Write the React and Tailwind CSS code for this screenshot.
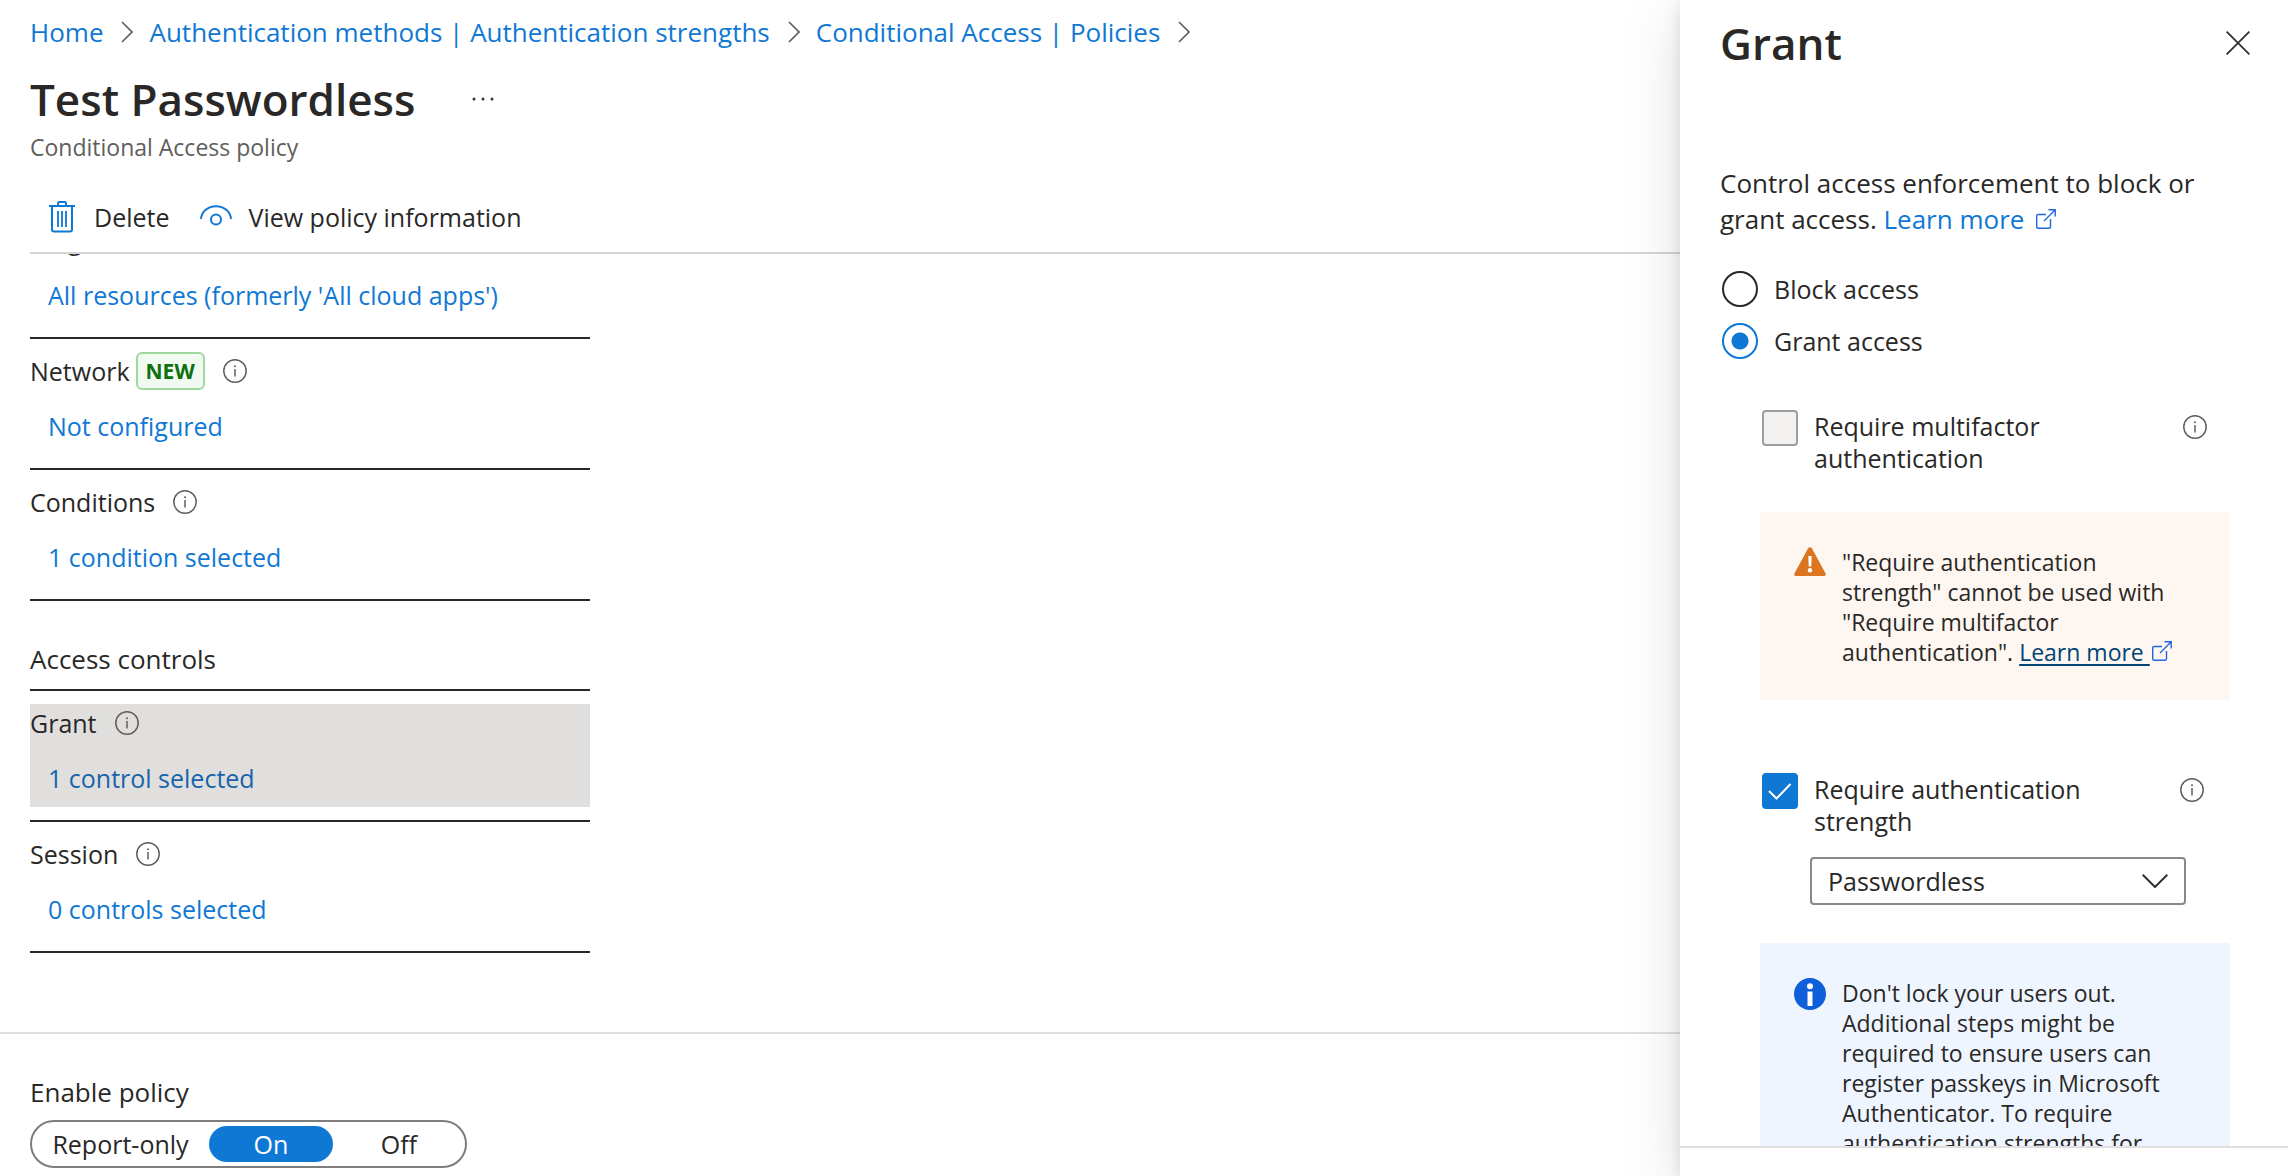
import { useState } from "react";

const migas = [
  "Home",
  "Authentication methods | Authentication strengths",
  "Conditional Access | Policies",
];

const modos = [
  { id: "report", label: "Report-only", ancho: "w-[177px]" },
  { id: "on", label: "On", ancho: "w-[124px]" },
  { id: "off", label: "Off", ancho: "w-[132px]" },
];

function InfoIcon() {
  return (
    <svg viewBox="0 0 24 24" className="w-6 h-6 shrink-0" fill="none" role="img" aria-label="Info">
      <circle cx="12" cy="12" r="11.2" stroke="#605e5c" strokeWidth="1.5" />
      <path d="M12 10v7.5" stroke="#605e5c" strokeWidth="1.5" />
      <circle cx="12" cy="7.2" r="1" fill="#605e5c" />
    </svg>
  );
}

function ExternalIcon({ className }) {
  return (
    <svg viewBox="0 0 20 20" className={`w-5 h-5 inline-block align-baseline ${className}`} fill="none" stroke="#1f66e0" strokeWidth="1.4" aria-hidden="true">
      <path d="M10 5.5H2.2a1.5 1.5 0 0 0-1.5 1.5v10.8a1.5 1.5 0 0 0 1.5 1.5H13a1.5 1.5 0 0 0 1.5-1.5V10" />
      <path d="M8 12 19 1M12.5.8h6.7v6.7" />
    </svg>
  );
}

function TrashIcon() {
  return (
    <svg viewBox="0 0 26 32" className="w-[26px] h-8" fill="none" stroke="#0f78d4" strokeWidth="2" aria-hidden="true">
      <path d="M0 5h26M9 4V2.2A1.2 1.2 0 0 1 10.2 1h5.6A1.2 1.2 0 0 1 17 2.2V4" />
      <path d="M3 5v23.5A2 2 0 0 0 5 30.5h16a2 2 0 0 0 2-2V5" />
      <path d="M9 10v16M13 10v16M17 10v16" strokeWidth="1.8" />
    </svg>
  );
}

function EyeIcon() {
  return (
    <svg viewBox="0 0 32 24" className="w-8 h-6" fill="none" stroke="#0f78d4" strokeWidth="2" aria-hidden="true">
      <path d="M1 14C1.5 6.5 8 1.2 16 1.2S30.5 6.5 31 14" />
      <circle cx="16" cy="14.5" r="5" />
    </svg>
  );
}

function Seccion({ titulo, valor, nuevo, activo }) {
  return (
    <div className="py-[13px] border-b-2 border-[#292827]">
      <div className={`pb-[11px] ${activo ? "bg-[#e1dfdd]" : ""}`}>
        <div className="flex items-center h-[38px]">
          <span>{titulo}</span>
          {nuevo && (
            <span className="ml-1.5 h-[38px] px-2 flex items-center rounded-md border-2 border-[#9fd89f] bg-[#f1faf1] text-[#0e700e] text-[21px] font-bold">
              NEW
            </span>
          )}
          <span className="ml-[18px]"><InfoIcon /></span>
        </div>
        <a href="#" className={`block mt-[18px] pl-[18px] ${activo ? "text-[#1664ab]" : "text-[#0f78d4]"}`}>
          {valor}
        </a>
      </div>
    </div>
  );
}

function Casilla({ id, label, checked, disabled, onChange, className }) {
  return (
    <div className={`flex items-start ${className}`}>
      <span className="grid shrink-0 ml-0.5">
        <input
          id={id}
          type="checkbox"
          checked={checked}
          disabled={disabled}
          onChange={onChange}
          className="col-start-1 row-start-1 appearance-none w-9 h-9 rounded border-2 border-[#323130] checked:bg-[#0f78d4] checked:border-[#0f78d4] disabled:bg-[#f3f2f1] disabled:border-[#a19f9d]"
        />
        {checked && (
          <svg viewBox="0 0 36 36" className="col-start-1 row-start-1 w-9 h-9 pointer-events-none" fill="none" stroke="#fff" strokeWidth="2" aria-hidden="true">
            <path d="m7 18 7.5 7.5L28.5 11" />
          </svg>
        )}
      </span>
      <label htmlFor={id} className="ml-4 w-[330px] leading-8">{label}</label>
      <span className="ml-auto mt-[5px]"><InfoIcon /></span>
    </div>
  );
}

export default function App() {
  const [modo, setModo] = useState("on");
  const [acceso, setAcceso] = useState("grant");
  const [fuerza, setFuerza] = useState(true);
  const [metodo, setMetodo] = useState("Passwordless");

  return (
    <div className="h-screen flex overflow-hidden bg-white text-[#292827] text-[25px] leading-9 font-['Open_Sans',sans-serif]">

      {/* Policy */}
      <main className="flex-1 min-w-0 flex flex-col">
        <header className="ml-[30px] border-b-2 border-[#d6d6d6] pb-[17px]">
          <nav className="flex items-center pt-3.5 text-[26px] text-[#0f78d4] whitespace-nowrap">
            {migas.map((m) => (
              <span key={m} className="flex items-center">
                <a href="#">{m}</a>
                <svg viewBox="0 0 12 22" className="w-3 h-[22px] ml-[18px] mr-4" fill="none" stroke="#605e5c" strokeWidth="1.6" aria-hidden="true">
                  <path d="m1 1 10 10L1 21" />
                </svg>
              </span>
            ))}
          </nav>

          <div className="flex items-center mt-[19px]">
            <h1 className="text-[44px] leading-[60px] font-semibold">Test Passwordless</h1>
            <button aria-label="More" className="ml-14">
              <svg viewBox="0 0 24 4" className="w-6 h-1" fill="#323130" aria-hidden="true">
                <circle cx="3" cy="2" r="1.5" />
                <circle cx="12" cy="2" r="1.5" />
                <circle cx="21" cy="2" r="1.5" />
              </svg>
            </button>
          </div>
          <p className="mt-[3px] text-[23px] leading-[30px] text-[#605e5c]">Conditional Access policy</p>

          <div className="flex mt-[37px] pl-[19px] gap-[31px]">
            <button className="flex items-center gap-[19px]">
              <TrashIcon />
              Delete
            </button>
            <button className="flex items-center gap-4">
              <EyeIcon />
              View policy information
            </button>
          </div>
        </header>

        {/* Assignments, scrolled down past the first rows */}
        <div className="flex-1 min-h-0 overflow-hidden pl-[30px]">
          <div className="max-w-[560px]">
            <div className="-mt-[46px]">
              <Seccion titulo="Target resources" valor="All resources (formerly 'All cloud apps')" />
            </div>
            <Seccion titulo="Network" valor="Not configured" nuevo />
            <Seccion titulo="Conditions" valor="1 condition selected" />

            <h2 className="mt-10 pb-3 text-[26px] border-b-2 border-[#292827]">Access controls</h2>
            <Seccion titulo="Grant" valor="1 control selected" activo />
            <Seccion titulo="Session" valor="0 controls selected" />
          </div>
        </div>

        <footer className="border-t-2 border-[#e1dfdd] pl-[30px] pt-10 pb-2">
          <fieldset>
            <legend className="text-[26px]">Enable policy</legend>
            <div className="mt-2.5 inline-flex py-1 rounded-full border-2 border-[#7f7d7b] align-top">
              {modos.map((m) => (
                <label
                  key={m.id}
                  className={`relative h-9 rounded-full text-center ${m.ancho} ${modo === m.id ? "bg-[#0f78d4] text-white" : ""}`}
                >
                  <input
                    type="radio"
                    name="modo"
                    className="sr-only"
                    checked={modo === m.id}
                    onChange={() => setModo(m.id)}
                  />
                  {m.label}
                </label>
              ))}
            </div>
          </fieldset>
        </footer>
      </main>

      {/* Grant panel */}
      <aside className="relative w-[608px] shrink-0 flex flex-col bg-white shadow-[0_13px_58px_rgba(0,0,0,0.13),0_2px_14px_rgba(0,0,0,0.11)]">
        <div className="flex items-center justify-between pt-[13px] pl-10 pr-[38px]">
          <h2 className="text-[44px] leading-[60px] font-semibold">Grant</h2>
          <button aria-label="Close">
            <svg viewBox="0 0 24 24" className="w-6 h-6" fill="none" stroke="#323130" strokeWidth="1.8" aria-hidden="true">
              <path d="m.6.6 22.8 22.8M23.4.6.6 23.4" />
            </svg>
          </button>
        </div>

        <div className="flex-1 min-h-0 overflow-hidden pt-[92px] pl-10 pr-[58px]">
          <p className="text-[26px]">
            Control access enforcement to block or grant access.{" "}
            <a href="#" className="text-[#0f78d4] whitespace-nowrap">
              Learn more
              <ExternalIcon className="ml-3" />
            </a>
          </p>

          <div className="mt-[34px] ml-0.5 flex flex-col gap-4">
            {[["block", "Block access"], ["grant", "Grant access"]].map(([id, label]) => (
              <label key={id} className="flex items-center gap-4">
                <input
                  type="radio"
                  name="acceso"
                  checked={acceso === id}
                  onChange={() => setAcceso(id)}
                  className="appearance-none w-9 h-9 rounded-full border-2 border-[#292827] checked:border-[#0f78d4] checked:bg-[radial-gradient(circle,#0f78d4_8px,transparent_9px)]"
                />
                {label}
              </label>
            ))}
          </div>

          <div className="pl-10">
            <Casilla id="mfa" label="Require multifactor authentication" checked={false} disabled className="mt-[51px] pr-[23px]" />

            <div className="mt-[38px] flex gap-4 rounded bg-[#fef7f1] pt-[35px] pb-[33px] pl-[34px] pr-14 text-[23px] leading-[30px]">
              <svg viewBox="0 0 32 30" className="w-8 h-[30px] shrink-0" aria-hidden="true">
                <path d="M14.3 1.1a2 2 0 0 1 3.4 0L31.6 26.5a1.7 1.7 0 0 1-1.5 2.5H1.9a1.7 1.7 0 0 1-1.5-2.5z" fill="#db751f" />
                <path d="M14.3 9h3.4l-.4 10.5h-2.6z" fill="#fff" />
                <circle cx="16" cy="23.2" r="2.2" fill="#fff" />
              </svg>
              <p>
                "Require authentication strength" cannot be used with "Require multifactor authentication".{" "}
                <span className="whitespace-nowrap">
                  <a href="#" className="text-[#004578] underline underline-offset-3 decoration-2 whitespace-pre">{"Learn more "}</a>
                  <ExternalIcon className="ml-0.5" />
                </span>
              </p>
            </div>

            <Casilla
              id="fuerza"
              label="Require authentication strength"
              checked={fuerza}
              onChange={(e) => setFuerza(e.target.checked)}
              className="mt-[73px] pr-[26px]"
            />

            <div className="mt-5 ml-[50px] mr-11 grid items-center">
              <select
                aria-label="Authentication strength"
                value={metodo}
                onChange={(e) => setMetodo(e.target.value)}
                className="col-start-1 row-start-1 appearance-none h-12 pl-4 rounded border-2 border-[#8a8886] bg-white"
              >
                <option>Passwordless</option>
              </select>
              <svg viewBox="0 0 26 14" className="col-start-1 row-start-1 justify-self-end mr-[18px] w-[26px] h-3.5 pointer-events-none" fill="none" stroke="#323130" strokeWidth="2" aria-hidden="true">
                <path d="m.7.7 12.3 12.3L25.3.7" />
              </svg>
            </div>

            <div className="mt-[38px] flex gap-4 rounded bg-[#eff5ff] pt-[35px] pb-[33px] pl-[34px] pr-14 text-[23px] leading-[30px]">
              <svg viewBox="0 0 32 32" className="w-8 h-8 shrink-0" aria-hidden="true">
                <circle cx="16" cy="16" r="16" fill="#0f5fdb" />
                <circle cx="16" cy="8.2" r="3" fill="#fff" />
                <path d="M13.5 13.5h5V28h-5z" fill="#fff" />
              </svg>
              <p>
                Don't lock your users out. Additional steps might be required to ensure users can register
                passkeys in Microsoft Authenticator. To require authentication strengths for
              </p>
            </div>
          </div>
        </div>

        <div className="h-[30px] shrink-0 border-t-2 border-[#e1dfdd]" />
      </aside>
    </div>
  );
}
